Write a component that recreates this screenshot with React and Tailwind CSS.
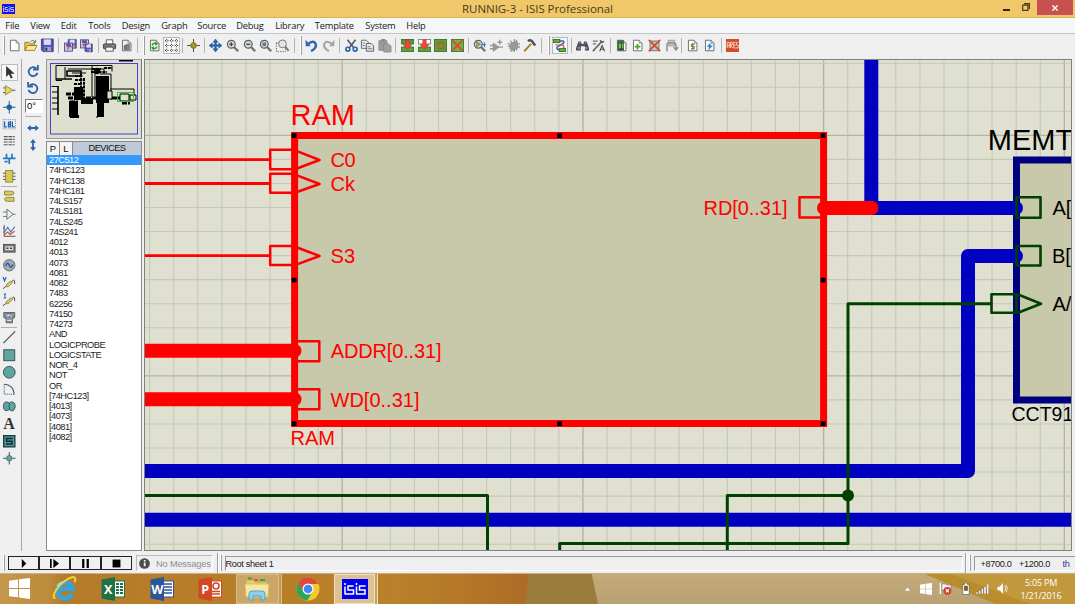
import React from "react";

const stroke = (d, c = "#333", w = 1.4, extra = {}) => (
  <path d={d} fill="none" stroke={c} strokeWidth={w} {...extra} />
);
const PAGE = "M3 1.5h7l3.5 3.5v9.5H3z";
const floppy = (x, y, s) => (
  <g transform={`translate(${x} ${y}) scale(${s})`}>
    <path d="M0 0h15v16H2L0 14z" fill="#5552b5" stroke="#363578" />
    <rect x="3" y="0.5" width="9" height="7" fill="#dcdcf4" />
    <rect x="4" y="10" width="8" height="5.5" fill="#a6a6c8" />
    <rect x="5" y="11" width="2.5" height="4" fill="#333366" />
  </g>
);
const zoomGlass = (inner) => (
  <>
    {stroke("M9.5 9.5L15 15", "#6d7176", 2.8)}
    <circle cx="6.5" cy="6.5" r="4.8" fill="#d2dadd" stroke="#596066" strokeWidth="1.4" />
    {inner}
  </>
);
const page = (inner, fill = "#fff") => (
  <>
    <path d={PAGE} fill={fill} stroke="#555" />
    <path d="M10 1.5V5h3.5" fill="#ddd" stroke="#666" strokeWidth=".8" />
    {inner}
  </>
);
const block = (second) => (
  <>
    <rect x="0.5" y="0.5" width="15" height="5.5" fill={second ? "#fff" : "#4f9d35"} stroke={second ? "#777" : "#2f6f20"} />
    <rect x="0.5" y="10" width="15" height="5.5" fill="#58a53b" stroke="#2f6f20" />
    <path d="M6 1h4v6h3.5L8 13 2.5 7H6z" fill="#ef4a35" stroke="#b7301f" strokeWidth=".7" />
  </>
);

const ICONS = {
  new: page(null),
  open: (
    <>
      <path d="M1 14V4h5l1.5 2H13v3" fill="#e8c34d" stroke="#8b701c" />
      <path d="M1 14L4.5 8H16l-3 6z" fill="#ffe894" stroke="#8b701c" />
      {stroke("M8 3q4-3 6 1m0-3v3.5h-3", "#666", 1.1)}
    </>
  ),
  save: floppy(0.5, 0, 0.97),
  importSec: (
    <>
      {floppy(5, 0.5, 0.68)}
      <rect x="0.5" y="5" width="10" height="10" fill="#c6c9ea" stroke="#44446f" />
      <path d="M2.500 5.500h6v3.500h-6z" fill="#5552b5" />
      {stroke("M5 13V9.500h5", "#d22f25", 1.3)}
    </>
  ),
  exportSec: (
    <>
      <rect x="0.5" y="1" width="10" height="10" fill="#c6c9ea" stroke="#44446f" />
      <path d="M2.500 1.500h6V5h-6z" fill="#5552b5" />
      {floppy(6, 6, 0.62)}
      {stroke("M4 9V6.500h6", "#d22f25", 1.3)}
    </>
  ),
  print: (
    <>
      <path d="M4 6V1h8v5" fill="#fff" stroke="#444" />
      <rect x="0.5" y="6" width="15" height="6" rx="1" fill="#73777b" stroke="#333" />
      <rect x="3.500" y="10" width="9" height="5" fill="#f7f7f7" stroke="#444" />
      <rect x="11.500" y="7.500" width="2" height="1.500" fill="#67d24f" />
    </>
  ),
  area: page(<path d="M5 8h2.500v5H5zM8 6.500h3.500V13H8z" fill="#888" stroke="#555" strokeWidth=".8" />, "#eee"),
  refresh: page(
    <>
      {stroke("M5 8q1-4 5.500-2M11 9q-1 4-5.500 2", "#2f9a35", 1.800)}
      <path d="M9 3l3.500 3.500L8.500 8zM7 14l-3.500-3.500L7.500 9z" fill="#2f9a35" />
    </>,
    "#eaf6e6"
  ),
  grid: (
    <path d="M2 0v16M8 0v16M14 0v16M0 2h16M0 8h16M0 14h16" stroke="#444" strokeWidth="1.300" strokeDasharray="1.300 1.700" fill="none" />
  ),
  origin: (
    <>
      {stroke("M8 0v16M0 8h16", "#555", 1.3)}
      <circle cx="8" cy="8" r="3.500" fill="#a79a22" stroke="#6c641c" />
    </>
  ),
  pan: (
    <path d="M8 0l3 4H9v3h3V5l4 3-4 3V9H9v3h2l-3 4-3-4h2V9H4v2L0 8l4-3v2h3V4H5z" fill="#2665b4" stroke="#174682" strokeWidth=".6" />
  ),
  zoomIn: zoomGlass(stroke("M4 6.500h5M6.500 4v5", "#333", 1.4)),
  zoomOut: zoomGlass(stroke("M4 6.500h5", "#333", 1.4)),
  zoomAll: zoomGlass(<rect x="4.300" y="4.300" width="4.400" height="4.400" fill="#6d767c" />),
  zoomArea: (
    <>
      <rect x="0.500" y="4.500" width="11" height="11" fill="none" stroke="#444" strokeDasharray="1.500 1.500" />
      {stroke("M11.500 9.500L15.500 14.500", "#777", 2.400)}
      <circle cx="8" cy="6" r="4.800" fill="#e2e8ea" stroke="#777" strokeWidth="1.200" />
    </>
  ),
  undo: (
    <>
      {stroke("M4 6Q10 1 13 5.500Q15 11 7.500 15", "#2e66b0", 3)}
      <path d="M0.500 1l3 3 3.500 5H1z" fill="#2e66b0" />
    </>
  ),
  redo: (
    <>
      {stroke("M12 6Q6 1 3 5.500Q1 11 8.500 15", "#a4a4a4", 2.600)}
      <path d="M15.500 1l-3 3L9 9h6z" fill="#a4a4a4" />
    </>
  ),
  cut: (
    <>
      {stroke("M3 1l8 10M13 1L5 11", "#555", 1.900)}
      <circle cx="3.500" cy="12.500" r="2.400" fill="none" stroke="#2667b5" strokeWidth="2" />
      <circle cx="12.500" cy="12.500" r="2.400" fill="none" stroke="#2667b5" strokeWidth="2" />
    </>
  ),
  copy: (
    <>
      <path d="M0.500 1.500h6l2.500 2.500v7.500H0.500z" fill="#eee" stroke="#555" />
      <path d="M6.500 5.500h6l3 3v6.500h-9z" fill="#e7ecf4" stroke="#445" />
      {stroke("M8 9.500h4M8 12h6M2 5h3M2 8h3", "#667", 1)}
    </>
  ),
  paste: (
    <>
      <path d="M1 2h10v12H1z" fill="#999" stroke="#909090" />
      <rect x="4" y="0" width="5" height="3" fill="#888" />
      <path d="M7 6h6l3 3v7H7z" fill="#a1a1a1" stroke="#858585" />
    </>
  ),
  blockCopy: block(false),
  blockMove: block(true),
  blockRotate: (
    <>
      <rect x="0.500" y="0.500" width="15" height="15" fill="#57a33a" stroke="#2f6f20" />
      <circle cx="8.500" cy="8" r="4" fill="none" stroke="#b35a23" strokeWidth="1.600" />
      <path d="M2 8h6L5 11.500z" fill="#e85130" />
    </>
  ),
  blockDelete: (
    <>
      <rect x="0.500" y="0.500" width="15" height="15" fill="#6bb44b" stroke="#2f6f20" />
      {stroke("M2 2l12 12M14 2L2 14", "#e8492c", 2.600)}
    </>
  ),
  pick: (
    <>
      {zoomGlass(<path d="M4.500 3.500v6l5-3z" fill="#b5a93a" stroke="#4f7c2c" strokeWidth=".8" />)}
      {stroke("M14 4v6M11 7h5", "#3573b7", 1.300)}
    </>
  ),
  make: (
    <>
      <path d="M4 5v10l7-5z" fill="#999" stroke="#888" />
      {stroke("M0 8h4M0 12h4M11 10h5M12 1v6M9 4h6", "#999", 1.600)}
    </>
  ),
  packaging: (
    <>
      <path d="M3 6l7-4 4 3v6l-7 4-4-3z" fill="#999" />
      {stroke("M1 5l2 2M1 9h3M4 2l2 3M9 0v4M12 1v4M14 6h2M14 10h2M5 13v3M9 12v4M12 11v3", "#888", 1.300)}
    </>
  ),
  hammer: (
    <>
      {stroke("M10 6L1.500 15", "#a8862c", 2.600)}
      {stroke("M6 2.500Q10 0 12 4L15 8", "#4d5154", 3)}
    </>
  ),
  wire: (
    <>
      <rect x="0.500" y="0.500" width="8" height="4" fill="#60ae46" stroke="#286b1e" />
      <rect x="7.500" y="11.500" width="8" height="4" fill="#60ae46" stroke="#286b1e" />
      {stroke("M8 2.500h4q2 0 1 2.500L5 10q-1 3 3 3.500", "#355fa8", 1.800)}
      {stroke("M3 7.500h9q2 1 1 4", "#cf4434", 1.300)}
    </>
  ),
  find: (
    <>
      <path d="M3 3h3l1 3h2l1-3h3l3 8v3h-5v-5H6v5H0v-3z" fill="#4b5158" />
      {stroke("M2 11h3M11 11h3M4 5h1M11 5h1", "#ccd", 1.300)}
    </>
  ),
  props: (
    <>
      {stroke("M1 15L12 3M10 1.500l2 2.500 3-1", "#5b6066", 2)}
      {stroke("M1 2.500h6M1 6h4", "#70757a", 1.500)}
      <path d="M9.500 15l3-7 3 7M10.700 12.500h3.600" fill="none" stroke="#444" strokeWidth="1.300" />
    </>
  ),
  explorer: page(
    <>
      <rect x="3" y="1.500" width="8" height="13" fill="#4d6650" />
      <rect x="5" y="6" width="5" height="5" fill="#79c45b" />
      {stroke("M8 5v8M5 13h6", "#244", 1)}
    </>
  ),
  newSheet: page(stroke("M8 6v7M4.500 9.500h7", "#49a532", 2.200)),
  delSheet: (
    <>
      <rect x="2.500" y="2.500" width="11" height="12" fill="#c5c2bd" stroke="#666" />
      {stroke("M1 1l14 14M15 1L1 15", "#d14a31", 2)}
    </>
  ),
  exitSheet: (
    <>
      <path d="M4 1.500h8v7H4z" fill="#c4c4c4" stroke="#999" />
      {stroke("M2.500 15V7q0-2 3-2h5q3 0 3 3v5m-3-3l3 3.500 2.500-3.500", "#8d8d8d", 1.800)}
    </>
  ),
  bom: page(stroke("M10.500 6.500H6.500v2.700h3.600v2.800H6M8.300 5v8.500", "#68731f", 1.200)),
  erc: page(<path d="M9.500 4.500L4.500 9.500h3l-1 4.500 5.500-6H9z" fill="#2785cd" />, "#edf6fb"),
  ares: (
    <>
      <rect x="0" y="0" width="16" height="16" fill="#d74a28" />
      {stroke("M1.500 11V4h2.500v7M1.500 8H4M5.500 11V4H8v3H5.500l2.500 4M12 4H9.500v7H12M9.500 7.500H12M15 4h-2v3.500h2V11h-2.500", "#fff3ea", 0.9)}
    </>
  ),
};

const TOOLBAR = [
  ["grip", 5], "new", "open", "save", ["sep", 5.8], "importSec", "exportSec", ["sep", 6], "print", "area",
  ["sep", 7], ["grip", 4.800], "refresh", "grid", ["sep", 5.7], "origin", ["sep", 5.8], "pan", "zoomIn", "zoomOut", "zoomAll", "zoomArea",
  ["sep", 7.500], ["grip", 5.2], "undo", "redo", ["sep", 5.9], "cut", "copy", "paste", ["sep", 6.300], "blockCopy", "blockMove", "blockRotate", "blockDelete",
  ["sep", 5.8], "pick", "make", "packaging", "hammer", ["sep", 7.600], ["grip", 5.800], "wire", ["sep", 5.7], "find", "props", ["sep", 5.7],
  "explorer", "newSheet", "delSheet", "exitSheet", ["sep", 5], "bom", "erc", ["sep", 6.600], "ares",
];

function Icon({ children, className = "size-[13.5px]" }) {
  return (
    <svg viewBox="0 0 16 16" className={`${className} shrink-0 overflow-visible`}>
      {children}
    </svg>
  );
}

function Toolbar() {
  return (
    <div className="flex h-[25px] shrink-0 items-center bg-[#efefef] pb-[2px] pl-px">
      {TOOLBAR.map((item, i) =>
        Array.isArray(item) ? (
          <div key={i} className="flex shrink-0 justify-center" style={{ width: item[1] }}>
            {item[0] === "grip" ? (
              <div className="h-[19px] w-[2px] border-r border-[#9d9d9d] bg-white" />
            ) : (
              <div className="h-[15px] w-px bg-[#b4b4b4]" />
            )}
          </div>
        ) : (
          <div
            key={i}
            className={`flex h-[17px] w-[16.67px] shrink-0 items-center justify-center ${
              item === "grid" || item === "wire" ? "border border-[#b8b8b8] bg-[#f7f7f7]" : ""
            }`}
          >
            <Icon className="size-[13px]">{ICONS[item]}</Icon>
          </div>
        )
      )}
    </div>
  );
}

const sheen = "#5fa5a2";
const MODES = [
  <path d="M4 0v14l3.500-3.500L10 16l2.500-1-2.500-5h5z" fill="#333" />,
  <>{stroke("M0 5h4M0 11h4M12 8h4", "#555", 1.200)}<path d="M3 2v12l10-6z" fill="#e2d65c" stroke="#8c8030" /></>,
  <>{stroke("M8 0v16M0 8h16", "#2c5a84", 1.300)}<circle cx="8" cy="8" r="3.500" fill="#1762a8" /></>,
  <>
    <rect x="0" y="2" width="16" height="12" fill="#e8eef8" stroke="#567" strokeDasharray="1 1.300" />
    {stroke("M2 4.500V11.500h3M7 5v6.500h2.500V5H7M7 8h2.500M12 4.500v7h3", "#1f60ac", 1.600)}
  </>,
  <path d="M1 2h14M1 5.500h14M1 9h14M1 12.500h14" stroke="#555" strokeWidth="1.500" strokeDasharray="5 1" fill="none" />,
  stroke("M0 7h16M4.500 1v6M11.500 1v6M8 7v7M2 11h4", "#2379c3", 2.200),
  <>{stroke("M0 4h16M0 8h16M0 12h16", "#555", 1.200)}<rect x="3.500" y="0.500" width="9" height="15" fill="#d6ca55" stroke="#7d7630" /></>,
  null,
  <>
    <path d="M2 1.500h8q4 0 4 2.500t-4 2.500H2z" fill="#d8cc58" stroke="#7d7630" />
    <path d="M14 9.500H6q-4 0-4 2.500t4 2.500h8z" fill="#d8cc58" stroke="#7d7630" />
  </>,
  <>{stroke("M0 5h5M0 11h5M12 8h4", "#449a9c", 1.300)}<path d="M5 1.500v13l8-6.500z" fill="#eee" stroke="#555" /></>,
  <>
    {stroke("M1.500 0v14.500H16M1.500 4H0M1.500 9H0", "#555", 1.300)}
    {stroke("M2 9l4-6 4 6 5-7", "#3a7fc4", 1.400)}
    {stroke("M2 12l4-3 3 3 6-4", "#d55334", 1.600)}
  </>,
  <>
    <rect x="0.500" y="3" width="15" height="10" fill="#777" stroke="#444" />
    <rect x="3" y="5.500" width="10" height="5" fill="#ddd" />
    {stroke("M4.500 8h2.500M9 8h2.500", "#333", 2)}
  </>,
  <><circle cx="8" cy="8" r="7.300" fill="#a3a9b0" stroke="#555" />{stroke("M3.500 9Q5.500 2.500 8 8T12.500 7", "#2160a8", 2)}</>,
  <>
    {stroke("M0 0l2 5 2-5", "#1d64b4", 1.500)}
    {stroke("M10 8q5-9 5 1M0 15l5-4", "#444", 1.200)}
    <path d="M4 10l6-5 2 2-6 6z" fill="#ded054" stroke="#7d7630" />
  </>,
  <>
    {stroke("M1 0h3M2.500 0v5M1 5h3", "#1d64b4", 1.300)}
    {stroke("M10 8q5-9 5 1M0 15l5-4", "#444", 1.200)}
    <path d="M4 10l6-5 2 2-6 6z" fill="#ded054" stroke="#7d7630" />
  </>,
  <>
    <path d="M1 2h14v6l-3 3v4H4v-4L1 8z" fill="#909498" stroke="#444" />
    <path d="M2.500 7.500q5.500-8 11 0z" fill="#dceaf5" stroke="#3675af" />
    {stroke("M8 7l2-4", "#d43", 1)}
    {stroke("M5 12h6", "#eee", 1.200)}
  </>,
  null,
  stroke("M0.500 15.500l15-15", "#444", 1.400),
  <rect x="1" y="1" width="14" height="14" fill={sheen} stroke="#34504f" strokeWidth="1.200" />,
  <circle cx="8" cy="8" r="7.500" fill={sheen} stroke="#34504f" strokeWidth="1.200" />,
  <>
    <path d="M1.500 1.500v13h13" fill="none" stroke="#2e66b0" strokeDasharray="1.500 1.200" strokeWidth="1.300" />
    {stroke("M1.500 1.500Q13 2 14.500 14.500", "#555", 1.300)}
  </>,
  <path d="M7.500 3.500Q8.500 4.500 10 2.500Q16 2 15.500 9Q14 16 9.500 13Q8 11.500 6.500 13Q1 15.500 0.500 8Q1 0 7.500 3.500zM8 4v8" fill={sheen} stroke="#34504f" strokeWidth="1.200" />,
  "A",
  <>
    <rect x="0.800" y="0.800" width="14.400" height="14.400" fill="#4f9896" stroke="#173a3a" strokeWidth="1.600" />
    {stroke("M12.500 4.500H4.500v3.500h7v3.500H3.500", "#102c2c", 1.900)}
  </>,
  <>{stroke("M8 0v16M0 8h16", "#555", 1.300)}<circle cx="8" cy="8" r="3.500" fill={sheen} stroke="#347070" /></>,
];

function ModeColumn() {
  return (
    <div className="flex w-[22px] shrink-0 flex-col items-center border-r border-[#a9a9a9] pr-[3px] pt-[5px]">
      {MODES.map((m, i) =>
        m === null ? (
          <div key={i} className="my-[1px] h-px w-[16px] shrink-0 bg-[#b0b0b0]" />
        ) : (
          <div
            key={i}
            className={`flex h-[17.280px] w-[17px] shrink-0 items-center justify-center ${i === 0 ? "border border-[#bcbcbc] bg-[#f8f8f8]" : ""}`}
          >
            {m === "A" ? (
              <span className="font-['Liberation_Serif',serif] text-[16px] font-bold leading-none text-[#333]">A</span>
            ) : (
              <Icon className="size-[12.500px]">{m}</Icon>
            )}
          </div>
        )
      )}
    </div>
  );
}

function RotateColumn() {
  const blue = "#2d62ab";
  return (
    <div className="flex w-[24px] shrink-0 flex-col items-center pr-[3px] pt-[6px]">
      <div className="h-[17px]"><Icon className="size-[12px]">{stroke("M12.500 4.500A6 6 0 1 0 14 10.500M14.500 0v6H8", blue, 2.400)}</Icon></div>
      <div className="h-[17px]"><Icon className="size-[12px]">{stroke("M3.500 4.500A6 6 0 1 1 2 10.500M1.500 0v6H8", blue, 2.400)}</Icon></div>
      <div className="h-[14px] w-[18px] self-end border border-[#777] border-b-white border-r-white bg-white pl-[1px] text-[9.500px] leading-[11px]">0°</div>
      <div className="mt-[3px] h-px w-[16px] bg-[#b0b0b0]" />
      <div className="mt-[5px] h-[17px]">
        <Icon className="size-[12px]"><path d="M0 8l5-4v2.800h6V4l5 4-5 4V9.200H5V12z" fill={blue} /></Icon>
      </div>
      <Icon className="size-[12px]"><path d="M8 0l4 5H9.200v6H12l-4 5-4-5h2.800V5H4z" fill={blue} /></Icon>
    </div>
  );
}

const DEVICES = [
  "27C512", "74HC123", "74HC138", "74HC181", "74LS157", "74LS181", "74LS245", "74S241", "4012", "4013",
  "4073", "4081", "4082", "7483", "62256", "74150", "74273", "AND", "LOGICPROBE", "LOGICSTATE",
  "NOR_4", "NOT", "OR", "[74HC123]", "[4013]", "[4073]", "[4081]", "[4082]",
];

function Overview() {
  return (
    <svg viewBox="47 60 94 77" className="h-[77px] w-[94px] bg-[#dedfce]">
      <rect x="50.500" y="63.500" width="87" height="70.500" fill="none" stroke="#4545cc" />
      <rect x="119" y="59" width="14" height="2.500" />
      <g fill="none" stroke="#000">
        <path d="M56 65.500h56v6M56 65.500v15h6M65 67v12M68 69h36v5M72 73h14M92 65v32M95 69v28M100 74h11v24M110 89h24v9M51.500 86.500h7M52 92h6M52 98h6M52 103h6M52 109h6" />
        <path d="M58 86v29M67 71h14v5H67zM56 79h16" strokeWidth="1.600" />
        <path d="M81 74v26M75 76h8M75 80h8M74 84h8M84 78v18M91 72h16M92 69h9M104 68h8" strokeWidth="2" strokeDasharray="3 .8" />
        <path d="M66 94h12M68 98h46M70 102h8M112 98h8M122 103h8" strokeWidth="3" strokeDasharray="5 1" />
      </g>
      <path d="M96 76h13v27H96zM74 87h9v13h-9zM81 98h12v6H81zM69 101h9v16h-9zM97 101h7v16h-7zM70 115h9v3h-9z" />
      <circle cx="97" cy="71" r="3.200" />
      <path d="M97 116v2M107 91h5v8h-5z" stroke="#000" fill="#dedfce" />
      <path d="M120 94h9v7h-9zM130 95h6v5h-6z" fill="#dedfce" stroke="#000" />
      <rect x="117.500" y="92.500" width="16" height="9" fill="none" stroke="#28c828" />
    </svg>
  );
}

function Sidebar() {
  return (
    <div className="flex w-[96px] shrink-0 flex-col">
      <div className="h-[80px] w-[96px] shrink-0 border border-[#9a9a9a] border-r-[#777] bg-[#dedfce]">
        <Overview />
      </div>
      <div className="mt-[2px] flex h-[410px] flex-col border border-[#8a8a8a] bg-white">
        <div className="flex h-[13px] shrink-0 text-[9.500px] leading-[13px] text-[#111]">
          <div className="w-[13px] border-r border-[#888] bg-[#f3f3f3] text-center">P</div>
          <div className="w-[13px] border-r border-[#888] bg-[#f3f3f3] text-center">L</div>
          <div className="flex-1 bg-[#bccad9] text-center text-[9.300px] tracking-[-0.550px]">DEVICES</div>
        </div>
        {DEVICES.map((d, i) => (
          <div
            key={d}
            className={`h-[10.250px] shrink-0 whitespace-nowrap pl-[2px] text-[9.300px] leading-[10.500px] tracking-[-0.540px] ${
              i === 0 ? "bg-[#3399ff] text-white" : "text-[#1c1c1c]"
            }`}
          >
            {d}
          </div>
        ))}
      </div>
    </div>
  );
}

const GRID_X = Array.from({ length: 39 }, (_, i) => 149.65 + i * 24.070);
const GRID_Y = Array.from({ length: 21 }, (_, i) => 63.2 + i * 24.050);
const HANDLES = [[294, 135.5], [559.5, 135.5], [823, 135.5], [294, 280], [823, 280], [294, 423.5], [559.5, 423.5], [823, 423.5]];

function Schematic() {
  const font = { fontFamily: "'Liberation Sans', Arial, sans-serif" };
  return (
    <svg viewBox="145 60 926 490" className="block h-[490px] w-[926px]" style={font}>
      <rect x="145" y="60" width="926" height="490" fill="#dfe0d0" />
      {GRID_X.map((x, i) => (
        <path key={`x${i}`} d={`M${x} 60V550`} stroke={i % 10 === 8 ? "#b4b4a4" : "#c6c7b6"} strokeWidth={i % 10 === 8 ? 1.4 : 1.1} />
      ))}
      {GRID_Y.map((y, i) => (
        <path key={`y${i}`} d={`M145 ${y}H1071`} stroke={i % 10 === 3 ? "#b4b4a4" : "#c6c7b6"} strokeWidth={i % 10 === 3 ? 1.4 : 1.1} />
      ))}

      <rect x="1016.500" y="160" width="90" height="240" fill="#c8c8aa" stroke="#000080" strokeWidth="7" />
      <g fill="none" stroke="#0000c0" strokeWidth="14" strokeLinecap="round" strokeLinejoin="round">
        <path d="M871.300 50V208H1016" />
        <path d="M1016 256H968V471H130" />
        <path d="M130 519.700H1090" />
      </g>
      <g fill="none" stroke="#004000" strokeWidth="3" strokeLinejoin="round">
        <path d="M145 495.500H487.500V552" />
        <path d="M727.300 552V495.500H848" />
        <path d="M991 303.700H848V543.600H559.700V552" />
        <path d="M1016.500 197.300h24v20.400h-24zM1016.500 246h24v19.500h-24zM991.500 294.300h25v18.500h-25z" strokeWidth="2.600" />
        <path d="M1018 294.500L1041 303.800L1018 312.800" strokeWidth="2.600" />
      </g>
      <circle cx="848" cy="495.500" r="6" fill="#004000" />

      <rect x="294.600" y="135.500" width="529" height="288" fill="#c8c8aa" stroke="#f00" strokeWidth="7" />
      <g fill="none" stroke="#f00" strokeWidth="2.800" strokeLinejoin="round">
        <path d="M145 159.700H270M145 183.500H270M145 255.700H270" />
        <path d="M294 149.700H270.200v19.600H294M294 173.700H270.200v19H294M294 246H270.200v19H294" strokeWidth="2.500" />
        <path d="M297 151.200L319.500 160L297 168.500M297 175.300L319.500 184L297 192M297 247.500L319.500 256L297 264.300" strokeWidth="2.500" />
        <path d="M296 341.200h23.300v20H296M296 389.200h23.300v20H296M822 197.300h-22.500v20.200H822" strokeWidth="2.500" />
      </g>
      <g stroke="#f00" strokeWidth="14" strokeLinecap="round">
        <path d="M130 350.800H294.500M130 399.300H294.500M824 208H871.500" />
      </g>
      {HANDLES.map(([x, y]) => (
        <rect key={`${x}-${y}`} x={x - 2.3} y={y - 2.3} width="4.800" height="4.800" fill="#000" />
      ))}

      <g fill="#f00" fontSize="20">
        <text x="290.500" y="124.600" fontSize="29" textLength="64.500">RAM</text>
        <text x="330.500" y="167" textLength="25">C0</text>
        <text x="330.500" y="190.800" textLength="24.500">Ck</text>
        <text x="330.500" y="262.700" textLength="24.500">S3</text>
        <text x="330.700" y="358" textLength="110.800">ADDR[0..31]</text>
        <text x="330.500" y="406.500" textLength="89">WD[0..31]</text>
        <text x="703.500" y="214.700" textLength="84">RD[0..31]</text>
        <text x="290.500" y="445.300" textLength="44.500">RAM</text>
      </g>
      <g fill="#000" fontSize="20">
        <text x="987.800" y="149.500" fontSize="29">MEMT</text>
        <text x="1052.500" y="214.700">A[</text>
        <text x="1052" y="262.700">B[</text>
        <text x="1052.500" y="310.500">A/</text>
        <text x="1011.500" y="420.500" fontSize="19.500">CCT91</text>
      </g>
    </svg>
  );
}

function StatusBar() {
  const btn = "flex h-[14px] w-[30.900px] items-center justify-center border-[1.500px] border-[#222] bg-[#f0f0f0]";
  return (
    <div className="flex h-[22px] shrink-0 items-center bg-[#efefef] pl-[3px] pt-[2px] text-[9.200px] leading-[14px] tracking-[-0.350px]">
      <div className="mr-[3px] h-[16px] w-[2px] border-r border-[#9d9d9d] bg-white" />
      <div className="flex">
        <div className={btn}><Icon className="size-[9px]"><path d="M5 0v16l8-8z" /></Icon></div>
        <div className={btn}><Icon className="size-[9px]"><path d="M0 0h3v16H0zM6 0v16l10-8z" /></Icon></div>
        <div className={btn}><Icon className="size-[9px]"><path d="M2 0h4v16H2zM10 0h4v16h-4z" /></Icon></div>
        <div className={btn}><Icon className="size-[9px]"><path d="M1 1h14v14H1z" /></Icon></div>
      </div>
      <div className="ml-[4px] flex h-[16px] w-[77px] items-center border border-[#bbb] border-b-white border-r-white pl-[2px] text-[#8d8d8d]">
        <Icon className="size-[11px]">
          <circle cx="8" cy="8" r="7.800" fill="#4c4c4c" />
          <path d="M7 6.500h2.500V12H7zM7 3h2.500v2.200H7z" fill="#fff" />
        </Icon>
        <span className="ml-[6.500px] whitespace-nowrap pt-px tracking-[-0.150px]">No Messages</span>
      </div>
      <div className="ml-[4px] h-[20px] w-[2px] border-l border-[#9d9d9d] bg-white" />
      <div className="ml-[1px] h-[16px] w-[2px] border-r border-[#9d9d9d] bg-white" />
      <div className="ml-[3px] flex h-[15px] w-[738px] items-center border border-[#999] border-b-white border-r-white pt-px text-[#222]">Root sheet 1</div>
      <div className="ml-[2px] h-[20px] w-[2px] border-l border-[#9d9d9d] bg-white" />
      <div className="ml-[2px] h-[16px] w-[2px] border-r border-[#9d9d9d] bg-white" />
      <div className="ml-[3px] flex h-[15px] flex-1 items-center whitespace-nowrap border border-r-0 border-[#999] border-b-white pl-[6px] pt-px text-[#222]">
        <span className="w-[38.500px]">+8700.0</span>
        <span className="w-[43.500px]">+1200.0</span>
        <span className="text-[#3535a0]">th</span>
      </div>
    </div>
  );
}

function OfficeIcon({ color, children, glyph }) {
  return (
    <svg viewBox="0 0 24 24" className="size-[24px]">
      <rect x="12" y="4" width="11.500" height="16" fill="#fff" stroke={color} />
      {glyph}
      <path d="M0.500 2.500L14 0v24L0.500 21.500z" fill={color} />
      <text x="7.200" y="16.500" textAnchor="middle" fontSize="12.500" fontWeight="700" fill="#fff" fontFamily="'Open Sans', sans-serif">
        {children}
      </text>
    </svg>
  );
}

function Taskbar() {
  return (
    <div className="grid h-[31px] shrink-0 overflow-hidden">
      <svg viewBox="0 0 1075 31" className="col-start-1 row-start-1 h-[31px] w-[1075px]">
        <defs>
          <linearGradient id="left" gradientUnits="userSpaceOnUse" x1="0" x2="530" y1="0" y2="0">
            <stop offset="0" stopColor="#c4984c" />
            <stop offset="0.090" stopColor="#bd8c3c" />
            <stop offset="0.120" stopColor="#b67b28" />
            <stop offset="0.750" stopColor="#b98129" />
            <stop offset="0.880" stopColor="#b47728" />
            <stop offset="1" stopColor="#ac6b27" />
          </linearGradient>
          <linearGradient id="tan" x1="0" x2="0" y1="0" y2="1">
            <stop offset="0" stopColor="#c3ab7a" />
            <stop offset="1" stopColor="#b9a172" />
          </linearGradient>
        </defs>
        <rect width="1075" height="31" fill="url(#left)" />
        <path d="M529 0H600V31H525z" fill="#9b7c3c" />
        <path d="M591.500 0H1075V31H598z" fill="url(#tan)" />
        <path d="M923 0H1075V31H996z" fill="#c1983c" />
        <path d="M923 0H948L1030 31H996z" fill="#b98c2c" />
        <path d="M0 .5H1075" stroke="#c9b084" />
      </svg>
      <div className="col-start-1 row-start-1 flex items-center">
        <svg viewBox="0 0 22 22" className="ml-[9px] size-[21px]" fill="#fff">
          <path d="M0 3l9.500-1.400v8.800H0zM10.500 1.400L22 0v10.400H10.500zM0 11.400h9.500v8.800L0 19zM10.500 11.400H22V22l-11.500-1.600z" />
        </svg>
        <svg viewBox="0 0 24 24" className="ml-[22px] size-[25px]">
          <path d="M19.500 17A7.500 7.500 0 1 1 20 12.500H7" fill="none" stroke="#35a3dc" strokeWidth="4.400" />
          <path d="M5 10Q7 6 12 5.500" fill="none" stroke="#9be0f7" strokeWidth="1.500" />
          <path d="M3.500 21Q-1 22 4.500 12.500Q12 3 20 1Q24 1 21.500 6" fill="none" stroke="#f1cf39" strokeWidth="2" />
        </svg>
        <div className="ml-[24px]">
          <OfficeIcon color="#1f7244" glyph={<path d="M15 7h3M19 7h3M15 10h3M19 10h3M15 13h3M19 13h3M15 16h3M19 16h3" stroke="#1f7244" strokeWidth="1.800" />}>X</OfficeIcon>
        </div>
        <div className="ml-[24.500px]">
          <OfficeIcon color="#2b569a" glyph={<path d="M14 7h8M14 10h8M14 13h8M14 16h8" stroke="#2b569a" strokeWidth="1.400" />}>W</OfficeIcon>
        </div>
        <div className="ml-[24.500px]">
          <OfficeIcon color="#d34726" glyph={<><circle cx="18" cy="9" r="3" fill="none" stroke="#d34726" strokeWidth="1.600" /><path d="M14 14.500h8M14 17h8" stroke="#d34726" strokeWidth="1.300" /></>}>P</OfficeIcon>
        </div>
        <div className="ml-[14px] flex h-[30px] w-[42.500px] items-center justify-center border border-[#d9bd85] bg-[#cba668]">
          <svg viewBox="0 0 26 24" className="h-[24px] w-[26px]">
            <path d="M2 3h8l1 2h12v14H2z" fill="#e8ce72" stroke="#c7a947" />
            <path d="M4 1.500h4M16 3h5" stroke="#3aa64a" strokeWidth="1.800" />
            <path d="M10 3h4" stroke="#cf4b38" strokeWidth="1.600" />
            <path d="M1 7h24l-1 13H2z" fill="#f8e7a0" stroke="#d9bd5c" />
            <path d="M5 23v-6q0-3 3-3h10q3 0 3 3v6h-4v-4H9v4z" fill="#8ed0ec" stroke="#4ea3cf" />
          </svg>
        </div>
        <div className="h-[30px] w-[3.500px] border-r border-[#d9bd85] bg-[#c39a57]" />
        <svg viewBox="0 0 24 24" className="ml-[14px] size-[24px]">
          <circle cx="12" cy="12" r="11.500" fill="#f4c92f" />
          <path d="M2 6A11.500 11.500 0 0 1 22.300 7H12L7 15z" fill="#dd4b3e" />
          <path d="M2 6A11.500 11.500 0 0 0 11.500 23.500L16.500 14.500H7.500z" fill="#31a354" />
          <circle cx="12" cy="12" r="5.500" fill="#fff" />
          <circle cx="12" cy="12" r="4.300" fill="#4285f4" />
        </svg>
        <div className="ml-[14px] flex h-[30px] w-[41px] items-center justify-center border border-[#f1e2c4] bg-[#dcc196]">
          <svg viewBox="0 0 26 20" className="h-[20px] w-[26px]">
            <rect width="26" height="20" fill="#0000f0" />
            <path d="M3 7.500V15M3 4v2M11.500 7H6v4h5.500v4H2.500M14.500 7.500V15M14.500 4v2M23.500 7H17.500v4h5.500v4H14" fill="none" stroke="#fff" strokeWidth="1.500" />
          </svg>
        </div>
        <div className="h-[30px] w-[3px] border-r border-[#f1e2c4] bg-[#c7a058]" />
        <div className="ml-auto flex items-center text-white">
          <svg viewBox="0 0 8 5" className="h-[4px] w-[7px]"><path d="M4 0l4 5H0z" fill="#fff" stroke="#666" strokeWidth=".4" /></svg>
          <svg viewBox="0 0 22 22" className="ml-[9.500px] size-[12px]" fill="#fff">
            <path d="M0 3l9.500-1.400v8.800H0zM10.500 1.400L22 0v10.400H10.500zM0 11.400h9.500v8.800L0 19zM10.500 11.400H22V22l-11.500-1.600z" />
          </svg>
          <svg viewBox="0 0 14 14" className="ml-[7px] size-[13px]">
            <path d="M1.500 1v12" stroke="#fff" strokeWidth="1.500" />
            <path d="M3 2h4l1 1h5v6H3z" fill="#eee" stroke="#666" strokeWidth=".6" />
            <circle cx="9" cy="9.500" r="4.200" fill="#d8382e" />
            <path d="M7.300 7.800l3.400 3.400M10.700 7.800l-3.400 3.400" stroke="#fff" strokeWidth="1.300" />
          </svg>
          <svg viewBox="0 0 8 13" className="ml-[10px] h-[12px] w-[8px]">
            <path d="M2.500 0h3v1.500H7.500v11h-7v-11h2z" fill="#fff" stroke="#444" strokeWidth=".6" />
            <path d="M2 3h4v5.500H2z" fill="#705c2c" />
          </svg>
          <svg viewBox="0 0 13 10" className="ml-[6px] h-[10px] w-[13px]" fill="#fff" stroke="#555" strokeWidth=".4">
            <path d="M0 8h2v2H0zM2.700 6.500h2V10h-2zM5.400 4.500h2V10h-2zM8 2.500h2V10H8zM10.700 0h2v10h-2z" />
          </svg>
          <svg viewBox="0 0 11 12" className="ml-[8px] h-[11px] w-[11px]">
            <path d="M0 4h2.500L6 0v12L2.500 8H0z" fill="#fff" />
            <path d="M8 3q2 3 0 6M9.500 2q2.500 4 0 8" stroke="#fff" fill="none" strokeWidth=".8" />
          </svg>
          <div className="ml-[8px] mr-[9px] w-[50px] whitespace-nowrap text-center font-['Open_Sans',sans-serif] text-[9px] leading-[13px] tracking-[-0.200px]">
            <div>5:05 PM</div>
            <div>1/21/2016</div>
          </div>
        </div>
      </div>
    </div>
  );
}

const MENU = [
  ["File", 25], ["View", 30.5], ["Edit", 27.5], ["Tools", 33.5], ["Design", 39.5], ["Graph", 36], ["Source", 39],
  ["Debug", 39], ["Library", 39.5], ["Template", 50.500], ["System", 41], ["Help", 30],
];

function TitleBar() {
  return (
    <div className="grid h-[18px] shrink-0 border-b border-[#d8b259] bg-[#f0c769]">
      <div className="col-start-1 row-start-1 text-center font-['Open_Sans',sans-serif] text-[11.500px] leading-[18px] tracking-[-0.050px] text-[#493b21]">
        RUNNIG-3 - ISIS Professional
      </div>
      <div className="col-start-1 row-start-1 flex items-start justify-between">
        <svg viewBox="0 0 26 20" className="ml-[1.500px] mt-[4px] h-[10px] w-[13px]">
          <rect width="26" height="20" fill="#1010f0" />
          <path d="M3 7.500V16M3 4v2M11.500 7H6v4h5.500v4H5M14.500 7.500V16M14.500 4v2M23.500 7H17.500v4h5.500v4H16.500" fill="none" stroke="#dde" strokeWidth="1.700" />
        </svg>
        <div className="flex items-start">
          <div className="mr-[12px] mt-[8.500px] h-[2px] w-[7px] bg-[#33290f]" />
          <svg viewBox="0 0 8 8" className="mr-[7px] mt-[3px] size-[8px]">
            <path d="M0.700 2.200h5.200v5.100H0.700zM2 .6h5.400V6" fill="none" stroke="#4b3d20" strokeWidth="1.200" />
          </svg>
          <div className="mr-[2px] flex h-[15px] w-[36px] items-center justify-center bg-[#c75050]">
            <svg viewBox="0 0 8 8" className="size-[6px]"><path d="M.5 .5l7 7M7.500 .5l-7 7" stroke="#fff" strokeWidth="1.800" /></svg>
          </div>
        </div>
      </div>
    </div>
  );
}

export default function App() {
  return (
    <div className="flex h-[604px] w-[1075px] flex-col overflow-hidden bg-[#efefef] font-['Liberation_Sans',Arial,sans-serif]">
      <TitleBar />
      <div className="flex h-[16px] shrink-0 items-center border-b border-[#c3c3c3] bg-[#f5f6f8] pl-[5.300px] pt-px font-['Open_Sans',sans-serif] text-[9.300px] leading-[14px] tracking-[-0.200px] text-[#1a1a1a]">
        {MENU.map(([name, w]) => (
          <span key={name} className="shrink-0 whitespace-nowrap" style={{ width: w }}>{name}</span>
        ))}
      </div>
      <Toolbar />
      <div className="flex h-[492px] shrink-0">
        <ModeColumn />
        <RotateColumn />
        <Sidebar />
        <div className="ml-[2px] w-[928px] shrink-0 border border-[#808080] bg-[#dfe0d0]">
          <Schematic />
        </div>
      </div>
      <StatusBar />
      <Taskbar />
    </div>
  );
}
